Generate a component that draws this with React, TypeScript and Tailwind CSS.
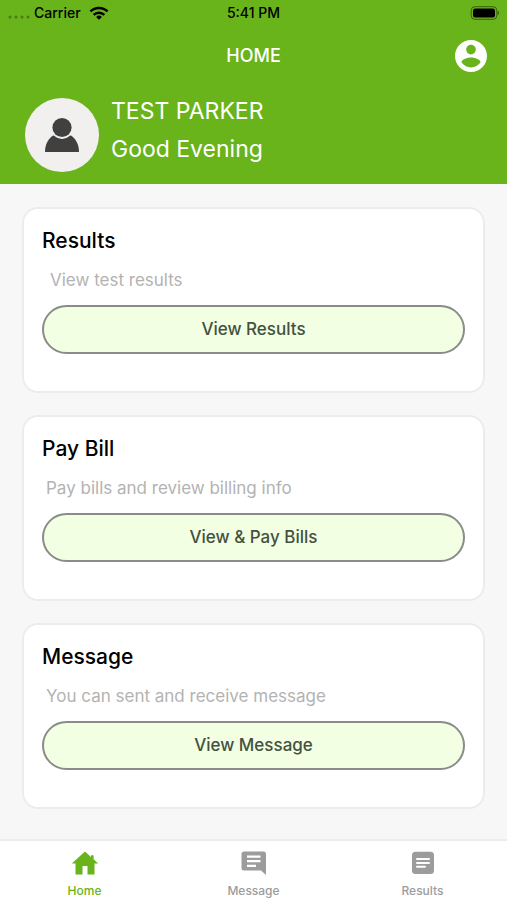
import { useState } from 'react';
import clsx from 'clsx';

const cards = [
  { title: 'Results', text: 'View test results', action: 'View Results', indent: 'pl-2' },
  { title: 'Pay Bill', text: 'Pay bills and review billing info', action: 'View & Pay Bills', indent: 'pl-1' },
  { title: 'Message', text: 'You can sent and receive message', action: 'View Message', indent: 'pl-1' },
];

function HomeIcon() {
  return (
    <svg viewBox="0 0 28 24" className="h-6 w-7" fill="currentColor" aria-hidden="true">
      <path d="M14 0.5 20 6V4.2h2.6v4.1L27.2 12.4h-3.7V23.5h-7v-8.5h-5v8.5h-7V12.4H0.8z" />
    </svg>
  );
}

function MessageIcon() {
  return (
    <svg viewBox="0 0 28 24" className="h-6 w-7" aria-hidden="true">
      <path fill="currentColor" d="M4 0.5h19.5a2.5 2.5 0 0 1 2.5 2.5v21l-5-4.5H4A2.5 2.5 0 0 1 1.5 17V3A2.5 2.5 0 0 1 4 .5z" />
      <path stroke="#fff" strokeWidth="2.2" d="M7 5.6h13.5M7 10.2h13.5M7 14.8h9" />
    </svg>
  );
}

function ResultsIcon() {
  return (
    <svg viewBox="0 0 28 24" className="h-6 w-7" aria-hidden="true">
      <rect x="3" y="0.8" width="22" height="22.2" rx="3.5" fill="currentColor" />
      <path stroke="#fff" strokeWidth="2" strokeLinecap="round" d="M8 8h12M8 11.9h12M8 15.8h8" />
    </svg>
  );
}

const tabs = [
  { key: 'Home', icon: HomeIcon },
  { key: 'Message', icon: MessageIcon },
  { key: 'Results', icon: ResultsIcon },
];

function StatusBar() {
  return (
    <div className="grid h-[26px] grid-cols-3 items-center px-2 text-sm font-medium text-black">
      <div className="flex items-center gap-1">
        <svg viewBox="0 0 22 6" className="mt-2 h-[6px] w-[22px]" fill="#000" fillOpacity="0.3" aria-hidden="true">
          <circle cx="2" cy="3" r="1.5" />
          <circle cx="8" cy="3" r="1.5" />
          <circle cx="14" cy="3" r="1.5" />
          <circle cx="20" cy="3" r="1.5" />
        </svg>
        <span>Carrier</span>
        <svg viewBox="0 0 20 14" className="ml-1 h-[14px] w-5" aria-hidden="true">
          <g fill="none" stroke="#000" strokeWidth="2.5">
            <path d="M1.4 5.4a12.3 12.3 0 0 1 17.2 0" />
            <path d="M4.7 8.8a7.6 7.6 0 0 1 10.6 0" />
          </g>
          <path d="M10 13.8 7.1 10.9a4.1 4.1 0 0 1 5.8 0z" />
        </svg>
      </div>
      <span className="text-center">5:41 PM</span>
      <svg viewBox="0 0 30 14" className="h-[14px] w-[30px] justify-self-end" aria-hidden="true">
        <rect x="2.2" y="0.7" width="25.6" height="12.6" rx="3.6" fill="none" stroke="#000" strokeOpacity="0.45" />
        <rect x="4" y="2.5" width="22" height="9" rx="2.2" />
        <path d="M28.7 4.8c1.6.6 1.6 3.8 0 4.4z" fillOpacity="0.5" />
      </svg>
    </div>
  );
}

function Header() {
  return (
    <header className="h-[184px] bg-[#69b31b] text-white">
      <StatusBar />
      <div className="grid h-[60px] grid-cols-[1fr_auto_1fr] items-center px-5">
        <h1 className="col-start-2 text-lg font-medium">HOME</h1>
        <button type="button" aria-label="Account" className="justify-self-end">
          <svg viewBox="2 2 20 20" className="size-8" fill="currentColor" aria-hidden="true">
            <path d="M12 2C6.48 2 2 6.48 2 12s4.48 10 10 10 10-4.48 10-10S17.52 2 12 2zm0 3c1.66 0 3 1.34 3 3s-1.34 3-3 3-3-1.34-3-3 1.34-3 3-3zm0 14.2c-2.5 0-4.71-1.28-6-3.22.03-1.99 4-3.08 6-3.08 1.99 0 5.97 1.09 6 3.08-1.29 1.94-3.5 3.22-6 3.22z" />
          </svg>
        </button>
      </div>
      <div className="flex items-start gap-3 px-[25px] pt-[6px]">
        <svg viewBox="0 0 74 74" className="mt-[6px] size-[74px]" aria-hidden="true">
          <circle cx="37" cy="37" r="37" fill="#f2f0ee" />
          <path fill="#404040" d="M20 54c0-8 3.5-13.5 8-16.5h18c4.5 3 8 8.5 8 16.5z" />
          <circle cx="37" cy="29.7" r="11.2" fill="#f2f0ee" />
          <circle cx="37" cy="29.5" r="9.6" fill="#404040" />
        </svg>
        <div className="text-[23px] leading-[38px]">
          <p>TEST PARKER</p>
          <p>Good Evening</p>
        </div>
      </div>
    </header>
  );
}

export default function App() {
  const [active, setActive] = useState('Home');

  return (
    <div className="flex min-h-screen flex-col bg-[#f7f7f7] font-['Inter',sans-serif]">
      <Header />
      <main className="flex flex-1 flex-col gap-[22px] px-[22px] pt-[23px] pb-6">
        {cards.map(({ title, text, action, indent }) => (
          <section key={title} className="rounded-2xl border-2 border-[#ececec] bg-white px-[18px] pt-4 pb-[37px]">
            <h2 className="text-[21px] leading-8 font-medium text-black">{title}</h2>
            <p className={clsx('pt-[11px] pb-[13px] text-[17px] leading-6 text-[#b3b3b3]', indent)}>{text}</p>
            <button
              type="button"
              className="h-[49px] w-full rounded-full border-2 border-[#8a8c88] bg-[#f2ffe3] text-[17px] font-medium text-[#445140]"
            >
              {action}
            </button>
          </section>
        ))}
      </main>
      <nav className="grid h-[61px] grid-cols-3 border-t-2 border-[#ececec] bg-white">
        {tabs.map(({ key, icon: Icon }) => (
          <button
            key={key}
            type="button"
            onClick={() => setActive(key)}
            className={clsx(
              'flex flex-col items-center gap-[6px] pt-[10px] text-xs leading-5 font-medium',
              active === key ? 'text-[#69b31b]' : 'text-[#9c9c9c]'
            )}
          >
            <Icon />
            {key}
          </button>
        ))}
      </nav>
    </div>
  );
}
